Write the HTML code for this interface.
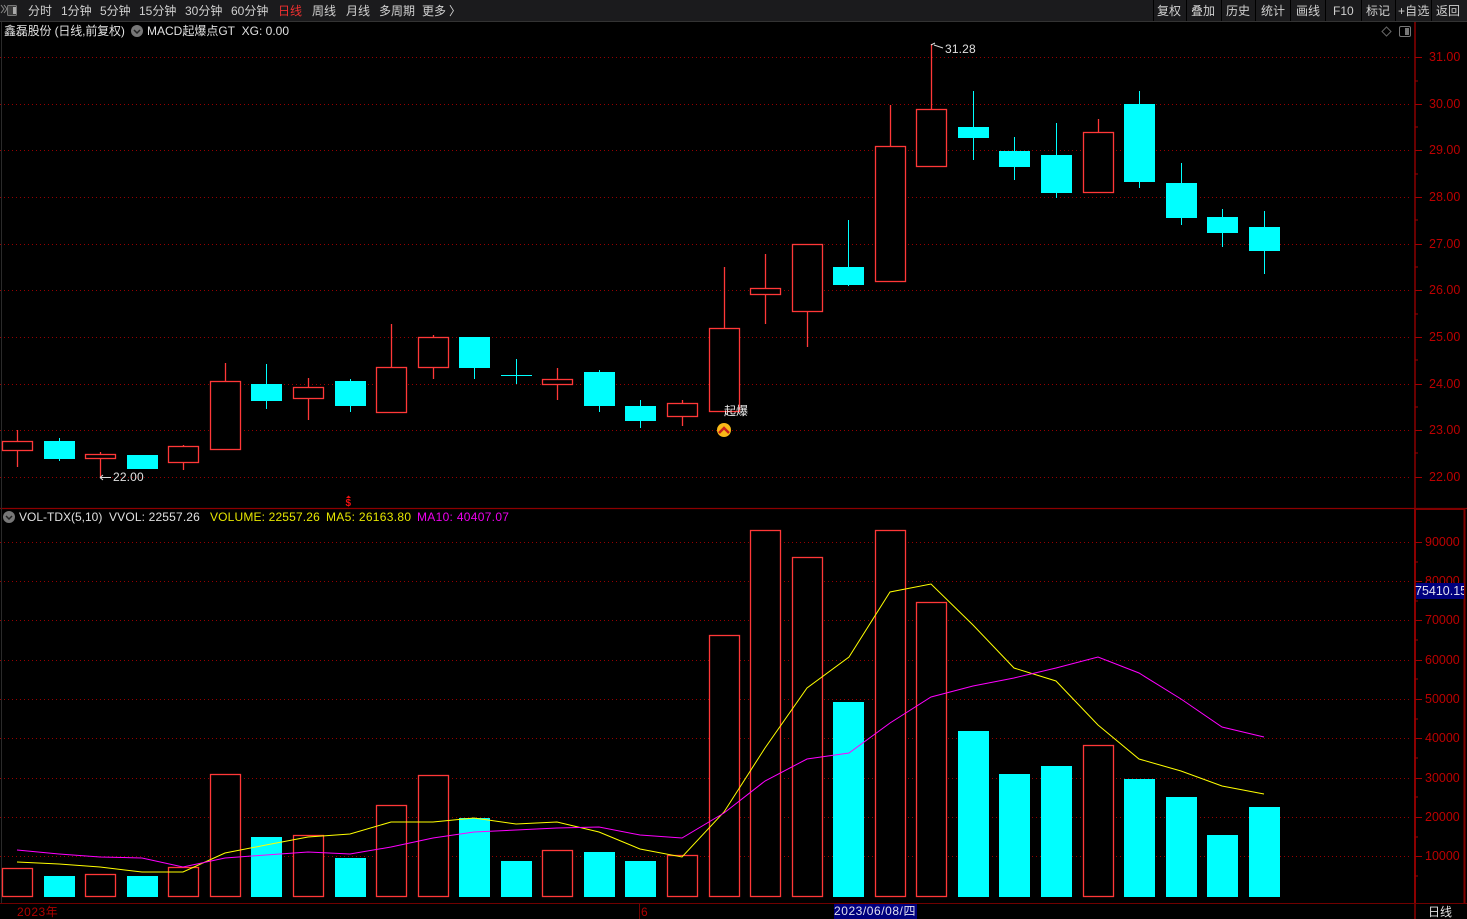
<!DOCTYPE html>
<html><head><meta charset="utf-8"><style>
html,body{margin:0;padding:0;background:#000;width:1467px;height:919px;overflow:hidden}
svg{display:block;font-family:"Liberation Sans","Noto Sans CJK SC",sans-serif;font-size:12px}
.m{fill:#d0d0d0}
.a{fill:#bc0000;font-size:12.5px}
.g{stroke:#960000;stroke-width:1;stroke-dasharray:1 3;fill:none;shape-rendering:crispEdges}
.r rect{fill:#000;stroke:#ff3838;stroke-width:1.3}
.c rect{fill:#0ff;shape-rendering:crispEdges}
.w{fill:#e0e0e0}
.s{letter-spacing:.16px}
.t{letter-spacing:.3px}
</style></head><body>
<svg width="1467" height="919" viewBox="0 0 1467 919" xmlns="http://www.w3.org/2000/svg">
<rect width="1467" height="919" fill="#000"/>
<rect width="1467" height="21" fill="#1b1b1d"/>
<rect y="21" width="1467" height="1" fill="#333"/>
<path d="M1153.500 0V21M1186.500 0V21M1221.500 0V21M1255.500 0V21M1290.500 0V21M1325.500 0V21M1361.500 0V21M1395.500 0V21M1431.500 0V21" stroke="#000" fill="none"/>
<rect x="7.500" y="5.500" width="9" height="10" rx="1" fill="#3a3a3a" stroke="#777"/><rect x="13" y="7" width="3" height="7" fill="#aaa"/>
<path d="M1 5L4 9L1 13M4 5L7 9L4 13" stroke="#888" fill="none"/>
<g class="m">
<text x="28" y="15">分时</text><text x="61" y="15">1分钟</text><text x="100" y="15">5分钟</text><text x="139" y="15">15分钟</text><text x="185" y="15">30分钟</text><text x="231" y="15">60分钟</text>
<text x="278" y="15" style="fill:#f03030">日线</text>
<text x="312" y="15">周线</text><text x="346" y="15">月线</text><text x="379" y="15">多周期</text><text x="422" y="15">更多</text><text x="449" y="15">〉</text>
<text x="1157" y="15">复权</text><text x="1191" y="15">叠加</text><text x="1226" y="15">历史</text><text x="1261" y="15">统计</text><text x="1296" y="15">画线</text><text x="1333" y="15">F10</text><text x="1366" y="15">标记</text><text x="1398" y="15" class="s">+自选</text><text x="1436" y="15">返回</text>
</g>
<path class="g" d="M0 57.500H1412M0 104.500H1412M0 150.500H1412M0 197.500H1412M0 244.500H1412M0 290.500H1412M0 337.500H1412M0 384.500H1412M0 430.500H1412M0 477.500H1412M0 542.500H1412M0 581.500H1412M0 620.500H1412M0 660.500H1412M0 699.500H1412M0 738.500H1412M0 778.500H1412M0 817.500H1412M0 856.500H1412"/>
<path d="M1415 22V919" stroke="#8c0000" stroke-width="1.500"/>
<path d="M0 508.500H1467" stroke="#8c0000" stroke-width="1.300"/>
<path d="M1415 509H1464.500V903" stroke="#800000" stroke-width="2" fill="none"/>
<path d="M1415 509V903" stroke="#8c0000" stroke-width="2"/>
<path d="M0 903.500H1467" stroke="#700000"/>
<path d="M1.500 22V903" stroke="#2a2a2a"/>
<path d="M1415 57.500h7M1415 104.500h7M1415 150.500h7M1415 197.500h7M1415 244.500h7M1415 290.500h7M1415 337.500h7M1415 384.500h7M1415 430.500h7M1415 477.500h7M1415 81h3M1415 127h3M1415 174h3M1415 220h3M1415 267h3M1415 314h3M1415 360h3M1415 407h3M1415 453h3M1415 542.500h7M1415 581.500h7M1415 620.500h7M1415 660.500h7M1415 699.500h7M1415 738.500h7M1415 778.500h7M1415 817.500h7M1415 856.500h7M1415 562h3M1415 601h3M1415 640h3M1415 679h3M1415 719h3M1415 758h3M1415 797h3M1415 837h3M1415 876h3" stroke="#a00000" fill="none"/>
<g class="a">
<text x="1429" y="61">31.00</text><text x="1429" y="108">30.00</text><text x="1429" y="154">29.00</text><text x="1429" y="201">28.00</text><text x="1429" y="248">27.00</text><text x="1429" y="294">26.00</text><text x="1429" y="341">25.00</text><text x="1429" y="388">24.00</text><text x="1429" y="434">23.00</text><text x="1429" y="481">22.00</text>
<text x="1425" y="546">90000</text><text x="1425" y="585">80000</text><text x="1425" y="624">70000</text><text x="1425" y="664">60000</text><text x="1425" y="703">50000</text><text x="1425" y="742">40000</text><text x="1425" y="782">30000</text><text x="1425" y="821">20000</text><text x="1425" y="860">10000</text>
</g>
<rect x="1416" y="583" width="48" height="16" fill="#00007e"/>
<svg x="1415" y="580" width="49" height="20"><text x="0" y="15" fill="#e0e0f0" style="font-size:12.500px">75410.15</text></svg>
<text x="4" y="35" class="w" style="letter-spacing:-.15px">鑫磊股份 (日线,前复权)</text>
<circle cx="137" cy="31" r="6" fill="#777"/><path d="M134 30l3 3 3-3" stroke="#222" stroke-width="1.500" fill="none"/>
<text x="147" y="35" class="w">MACD起爆点GT&#160; XG: 0.00</text>
<path d="M1386.500 27l4.500 4.500-4.500 4.500-4.500-4.500z" stroke="#666" fill="none"/>
<rect x="1399.500" y="26.500" width="11" height="10" rx="1.500" stroke="#777" fill="none"/><rect x="1405" y="28" width="4" height="7" fill="#777"/>
<circle cx="9" cy="517" r="6" fill="#777"/><path d="M6 516l3 3 3-3" stroke="#222" stroke-width="1.500" fill="none"/>
<text x="19" y="521" class="w">VOL-TDX(5,10)</text>
<text x="109" y="521" class="w s">VVOL: 22557.26</text>
<text x="210" y="521" fill="#e6e600" class="s">VOLUME: 22557.26</text>
<text x="326" y="521" fill="#e6e600" class="t">MA5: 26163.80</text>
<text x="417" y="521" fill="#ee00ee" class="t">MA10: 40407.07</text>
<path d="M17.500 430V467M100.500 452V478M183.500 445V470M225.500 363V450M308.500 378V420M391.500 324V413M433.500 335V379M557.500 368V400M682.500 400V426M724.500 267V412M765.500 254V324M807.500 245V347M890.500 105V282M931.500 44V167M1098.500 119V193" stroke="#ff3838" stroke-width="1.300" fill="none"/>
<path d="M59.500 438V461M142.500 455V469M266.500 364V409M350.500 379V412M474.500 338V379M516.500 359V384M599.500 370V412M640.500 400V428M848.500 220V286M973.500 91V160M1014.500 137V180M1056.500 123V198M1139.500 91V188M1181.500 163V225M1222.500 209V247M1264.500 211V274M501 375.500H532" stroke="#0ff" fill="none" shape-rendering="crispEdges"/>
<g class="r">
<rect x="2.500" y="441.500" width="30" height="9"/><rect x="85.500" y="454.500" width="30" height="4"/><rect x="168.500" y="446.500" width="30" height="16"/><rect x="210.500" y="381.500" width="30" height="68"/><rect x="293.500" y="387.500" width="30" height="11"/><rect x="376.500" y="367.500" width="30" height="45"/><rect x="418.500" y="337.500" width="30" height="30"/><rect x="542.500" y="379.500" width="30" height="5"/><rect x="667.500" y="403.500" width="30" height="13"/><rect x="709.500" y="328.500" width="30" height="83"/><rect x="750.500" y="288.500" width="30" height="6"/><rect x="792.500" y="244.500" width="30" height="67"/><rect x="875.500" y="146.500" width="30" height="135"/><rect x="916.500" y="109.500" width="30" height="57"/><rect x="1083.500" y="132.500" width="30" height="60"/>
</g>
<g class="c">
<rect x="44" y="441" width="31" height="18"/><rect x="127" y="455" width="31" height="14"/><rect x="251" y="384" width="31" height="17"/><rect x="335" y="381" width="31" height="25"/><rect x="459" y="337" width="31" height="31"/><rect x="584" y="372" width="31" height="34"/><rect x="625" y="406" width="31" height="15"/><rect x="833" y="267" width="31" height="18"/><rect x="958" y="127" width="31" height="11"/><rect x="999" y="151" width="31" height="16"/><rect x="1041" y="155" width="31" height="38"/><rect x="1124" y="104" width="31" height="78"/><rect x="1166" y="183" width="31" height="35"/><rect x="1207" y="217" width="31" height="16"/><rect x="1249" y="227" width="31" height="24"/>
</g>
<path d="M931 45l4-2M934 45l9 3" stroke="#ddd" fill="none"/>
<text x="945" y="53" class="w s">31.28</text>
<path d="M100 477.500h11M100 477.500l3-2.500M100 477.500l3 2.500" stroke="#ddd" fill="none"/>
<text x="113" y="481" class="w s">22.00</text>
<text x="724" y="415" fill="#eee">起爆</text>
<circle cx="724" cy="430" r="7" fill="#f8b818"/><path d="M719 433l5-5 5 5" stroke="#c8201a" stroke-width="2.400" fill="none"/>
<text x="345.500" y="506" fill="#f01010" style="font-size:10px;font-weight:bold">$</text><path d="M348.500 495.500l-2.500 2.500h5z" fill="#f01010"/>
<g class="r">
<rect x="2.500" y="868.500" width="30" height="28"/><rect x="85.500" y="874.500" width="30" height="22"/><rect x="168.500" y="867.500" width="30" height="29"/><rect x="210.500" y="774.500" width="30" height="122"/><rect x="293.500" y="835.500" width="30" height="61"/><rect x="376.500" y="805.500" width="30" height="91"/><rect x="418.500" y="775.500" width="30" height="121"/><rect x="542.500" y="850.500" width="30" height="46"/><rect x="667.500" y="855.500" width="30" height="41"/><rect x="709.500" y="635.500" width="30" height="261"/><rect x="750.500" y="530.500" width="30" height="366"/><rect x="792.500" y="557.500" width="30" height="339"/><rect x="875.500" y="530.500" width="30" height="366"/><rect x="916.500" y="602.500" width="30" height="294"/><rect x="1083.500" y="745.500" width="30" height="151"/>
</g>
<g class="c">
<rect x="44" y="876" width="31" height="21"/><rect x="127" y="876" width="31" height="21"/><rect x="251" y="837" width="31" height="60"/><rect x="335" y="858" width="31" height="39"/><rect x="459" y="818" width="31" height="79"/><rect x="501" y="861" width="31" height="36"/><rect x="584" y="852" width="31" height="45"/><rect x="625" y="861" width="31" height="36"/><rect x="833" y="702" width="31" height="195"/><rect x="958" y="731" width="31" height="166"/><rect x="999" y="774" width="31" height="123"/><rect x="1041" y="766" width="31" height="131"/><rect x="1124" y="779" width="31" height="118"/><rect x="1166" y="797" width="31" height="100"/><rect x="1207" y="835" width="31" height="62"/><rect x="1249" y="807" width="31" height="90"/>
</g>
<polyline fill="none" stroke="#ffff00" points="17,862 59,864 100,867 142,872 183,872 225,853 266,845 308,837 350,834 391,822 433,822 474,818 516,824 557,822 599,832 640,849 682,857 724,812 765,748 807,688 849,657 890,592 931,584 973,625 1014,668 1056,681 1098,725 1139,759 1181,771 1222,786 1264,794"/>
<polyline fill="none" stroke="#ff00ff" points="17,850 59,854 100,857 142,858 183,867 225,858 266,855 308,852 350,854 391,847 433,838 474,832 516,830 557,828 599,827 640,835 682,838 724,813 765,781 807,759 849,753 890,723 931,697 973,686 1014,678 1056,668 1098,657 1139,673 1181,699 1222,727 1264,737"/>
<text x="17" y="916" fill="#b00000" style="letter-spacing:.5px">2023年</text>
<path d="M639.500 904V919" stroke="#700000"/>
<text x="641" y="916" fill="#b00000">6</text>
<rect x="834" y="904" width="83" height="15" fill="#00007e"/>
<text x="834" y="915" fill="#e0e0f0" style="letter-spacing:.55px">2023/06/08/四</text>
<text x="1428" y="916" class="w">日线</text>
</svg>
</body></html>
